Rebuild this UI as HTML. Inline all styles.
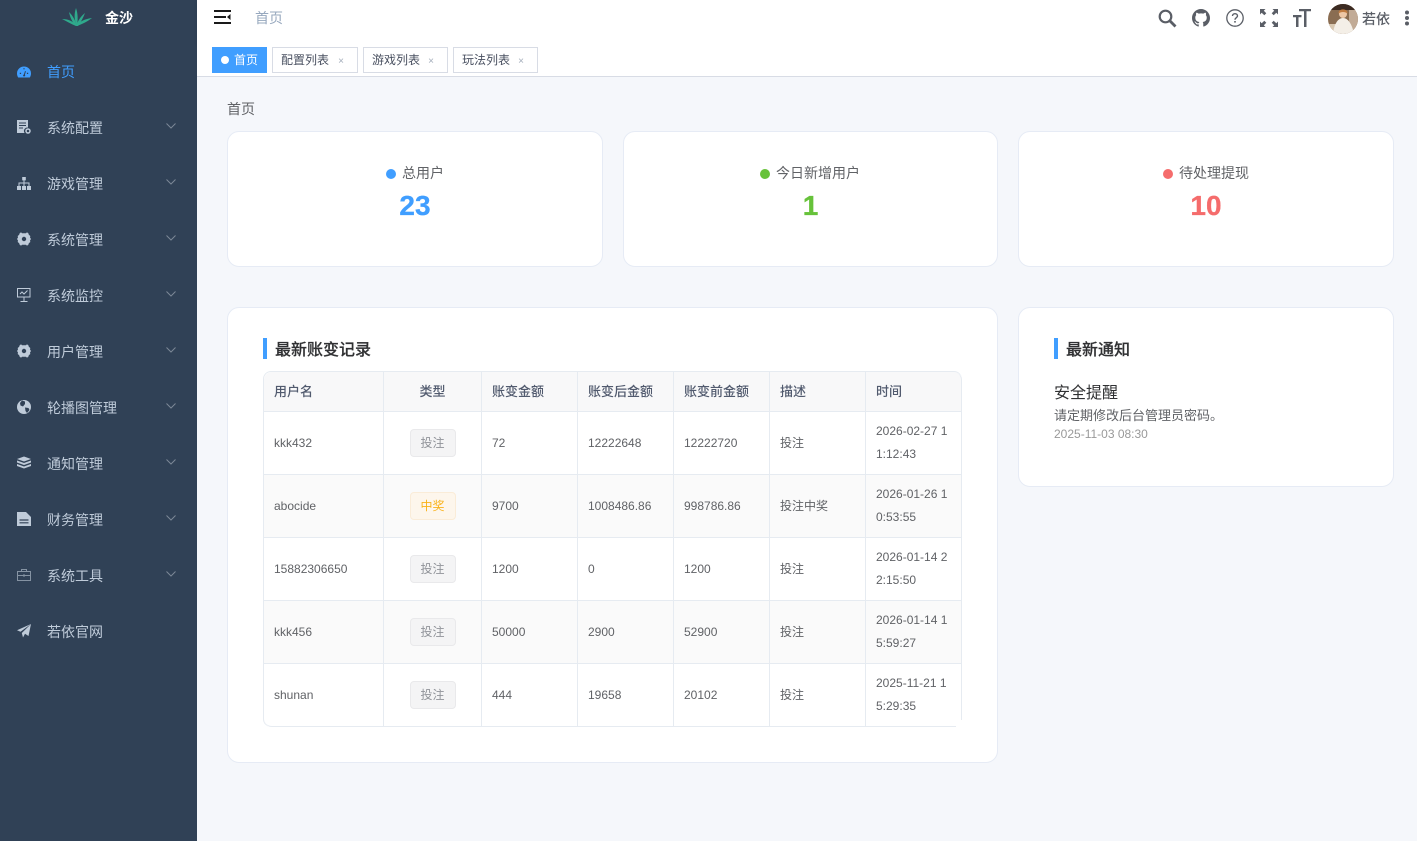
<!DOCTYPE html>
<html lang="zh"><head><meta charset="utf-8"><title>首页</title>
<style>
*{box-sizing:border-box}
html,body{margin:0;padding:0}
body{width:1417px;height:841px;overflow:hidden;position:relative;background:#f5f7fb;font-family:"Liberation Sans","Noto Sans CJK SC",sans-serif;color:#606266;font-size:12px}
.a{position:absolute;white-space:nowrap}
#side{left:0;top:0;width:197px;height:841px;background:#304156}
.mi{position:absolute;left:47px;width:110px;height:20px;line-height:20px;font-size:14px;color:#bfcbd9}
.ic{position:absolute;left:17px;width:14px;height:14px}
.ar{position:absolute;left:166px;width:10px;height:6px}
#top{left:197px;top:0;width:1220px;height:44px;background:#fff;box-shadow:0 1px 4px rgba(0,21,41,.06)}
#tags{left:197px;top:44px;width:1220px;height:33px;background:#fff;border-bottom:1px solid #d8dce5}
.tag{position:absolute;top:47px;height:26px;line-height:25px;border:1px solid #d8dce5;background:#fff;color:#495060;font-size:12px;padding-left:8px}
.tag i{position:absolute;right:13px;top:1px;font-style:normal;font-size:10px;color:#a3adba}
.card{position:absolute;background:#fff;border:1px solid #e6ebf5;border-radius:12px}
.lab{position:absolute;font-size:14px;color:#606266;line-height:20px;white-space:nowrap}
.dot{display:inline-block;width:10px;height:10px;border-radius:50%;margin-right:6px;vertical-align:-0.5px}
.num{position:absolute;font-size:28px;font-weight:700;line-height:32px;text-align:center;-webkit-text-stroke:.3px currentColor}
.ttl{position:absolute;height:21px;border-left:4px solid #409eff;padding-left:8px;font-size:16px;line-height:25px;font-weight:500;color:#303133;white-space:nowrap;-webkit-text-stroke:.2px #303133}
table{position:absolute;left:263px;top:371px;width:699px;border-collapse:separate;border-spacing:0;table-layout:fixed;border-top:1px solid #e6ebf1;border-left:1px solid #e6ebf1;border-radius:8px 8px 0 8px;font-size:12px;color:#606266;background:#fff}
td,th{border-right:1px solid #e6ebf1;border-bottom:1px solid #e6ebf1;padding:0 10px;text-align:left;vertical-align:middle;font-weight:400}
th{height:40px;background:#f8f8f9;color:#515a6e;font-size:13px;font-weight:500;border-radius:0;padding-bottom:2px}
th:first-child{border-top-left-radius:8px}
th:last-child{border-top-right-radius:8px}
tr:last-child td:first-child{border-bottom-left-radius:8px}
tr.o td{background:#fafafa}
td{height:63px;line-height:23px;word-break:break-all}
.c{text-align:center}
th.c{text-align:center}
.b{display:inline-block;width:46px;height:28px;line-height:26px;text-align:center;border-radius:4px;border:1px solid #e9e9eb;background:#f4f4f5;color:#909399;font-size:12px;vertical-align:middle}
.b.w{background:#fdf6ec;border-color:#faecd8;color:#f9b21a}
</style></head><body>

<div class="a" id="side">
<svg class="a" style="left:62px;top:8px" width="30" height="19" viewBox="0 0 30 19"><g fill="#2fa98c"><path d="M15 18C12 12 12 6 14 0C16 6 16 12 15 18Z"/><path d="M14 18C10 14 8 9 7 4C11 8 13 12 15 18Z"/><path d="M16 18C19 14 21 10 23 5C18 9 16 13 14 18Z"/><path d="M14 18C9 16 4 13 0 11C6 11 11 13 15 18Z"/><path d="M15 18C20 16 25 14 30 10C23 11 18 13 14 18Z"/></g></svg>
<div class="a" style="left:105px;top:9px;font-size:14px;line-height:18px;font-weight:700;color:#fff">金沙</div>

<svg class="ic" style="top:65px" viewBox="0 0 14 14"><path fill="#409eff" fill-rule="evenodd" d="M7 1.500A7 7 0 0 0 0 8.500C0 10 .5 11.300 1.200 12.500H12.800C13.500 11.300 14 10 14 8.500A7 7 0 0 0 7 1.500ZM6.500 3h1v1.400h-1ZM2.800 7.800h1.300V9H2.800ZM9.900 7.800h1.300V9H9.900ZM8 6l.9.400-1 3.400a1 1 0 1 1-1-.3Z"/></svg>
<div class="mi" style="top:62px;color:#409eff">首页</div>

<svg class="ic" style="top:120px" viewBox="0 0 14 14"><path fill="#bfcbd9" d="M0 0h11v7.500A3.500 3.500 0 0 0 7.600 13H0Z"/><path stroke="#304156" fill="none" d="M2 3h7M2 5.500h7M2 8h4"/><circle cx="11" cy="11" r="2" fill="none" stroke="#bfcbd9" stroke-width="1.500"/></svg>
<div class="mi" style="top:118px">系统配置</div>
<svg class="ar" style="top:123px" viewBox="0 0 10 6"><path d="M.5.500 5 5 9.500.500" fill="none" stroke="#7c8896"/></svg>

<svg class="ic" style="top:176px" viewBox="0 0 14 14"><path fill="#bfcbd9" d="M5.200 1h3.600v3.400H7.500V6.500h5V10h-1V7.500H7.500V10h-1V7.500H2.500V10h-1V6.500h5V4.400H5.200ZM0 10h4v4H0ZM5 10h4v4H5ZM10 10h4v4h-4Z"/></svg>
<div class="mi" style="top:174px">游戏管理</div>
<svg class="ar" style="top:179px" viewBox="0 0 10 6"><path d="M.5.500 5 5 9.500.500" fill="none" stroke="#7c8896"/></svg>

<svg class="ic" style="top:232px" viewBox="0 0 14 14"><path fill="#bfcbd9" fill-rule="evenodd" d="M4 .3 5 1.200H9L10 .3 11.500 1.500 11.800 2.800 13.300 4 13 5.500 14 7 13 8.500 13.300 10 11.800 11.200 11.500 12.500 10 13.700 9 12.800H5L4 13.700 2.500 12.500 2.200 11.200.7 10 1 8.500 0 7 1 5.500.7 4 2.200 2.800 2.500 1.500ZM7 4.800a2.200 2.200 0 1 0 0 4.400 2.200 2.200 0 0 0 0-4.400Z"/></svg>
<div class="mi" style="top:230px">系统管理</div>
<svg class="ar" style="top:235px" viewBox="0 0 10 6"><path d="M.5.500 5 5 9.500.500" fill="none" stroke="#7c8896"/></svg>

<svg class="ic" style="top:288px" viewBox="0 0 14 14"><path fill="none" stroke="#bfcbd9" d="M.5.500h12.500v8.500H.5ZM7 9v4M3.500 13.500h7M3 6l2-2 2 2 3.500-3.500"/></svg>
<div class="mi" style="top:286px">系统监控</div>
<svg class="ar" style="top:291px" viewBox="0 0 10 6"><path d="M.5.500 5 5 9.500.500" fill="none" stroke="#7c8896"/></svg>

<svg class="ic" style="top:344px" viewBox="0 0 14 14"><path fill="#bfcbd9" fill-rule="evenodd" d="M4 .3 5 1.200H9L10 .3 11.500 1.500 11.800 2.800 13.300 4 13 5.500 14 7 13 8.500 13.300 10 11.800 11.200 11.500 12.500 10 13.700 9 12.800H5L4 13.700 2.500 12.500 2.200 11.200.7 10 1 8.500 0 7 1 5.500.7 4 2.200 2.800 2.500 1.500ZM7 4.800a2.200 2.200 0 1 0 0 4.400 2.200 2.200 0 0 0 0-4.400Z"/></svg>
<div class="mi" style="top:342px">用户管理</div>
<svg class="ar" style="top:347px" viewBox="0 0 10 6"><path d="M.5.500 5 5 9.500.500" fill="none" stroke="#7c8896"/></svg>

<svg class="ic" style="top:400px" viewBox="0 0 14 14"><circle cx="7" cy="7" r="7" fill="#bfcbd9"/><path fill="#304156" d="M5 .5 8 1.500 8 4 6 6.500 3.500 5.500 3 3ZM8 7.500l3.500.5 1 2-2.500 3-1.500-2Z"/></svg>
<div class="mi" style="top:398px">轮播图管理</div>
<svg class="ar" style="top:403px" viewBox="0 0 10 6"><path d="M.5.500 5 5 9.500.500" fill="none" stroke="#7c8896"/></svg>

<svg class="ic" style="top:456px" viewBox="0 0 14 14"><path fill="#bfcbd9" d="M7 .5 14 3 7 5.500 0 3Z"/><path fill="#bfcbd9" d="M0 4.500 7 7 14 4.500V6.500L7 9 0 6.500ZM0 8 7 10.500 14 8V10L7 12.500 0 10Z"/></svg>
<div class="mi" style="top:454px">通知管理</div>
<svg class="ar" style="top:459px" viewBox="0 0 10 6"><path d="M.5.500 5 5 9.500.500" fill="none" stroke="#7c8896"/></svg>

<svg class="ic" style="top:512px" viewBox="0 0 14 14"><path fill="#bfcbd9" d="M0 0h9l5 5v9H0Z"/><path stroke="#304156" stroke-width="1.200" d="M2.500 8h9M2.500 10.800h9"/></svg>
<div class="mi" style="top:510px">财务管理</div>
<svg class="ar" style="top:515px" viewBox="0 0 10 6"><path d="M.5.500 5 5 9.500.500" fill="none" stroke="#7c8896"/></svg>

<svg class="ic" style="top:568px" viewBox="0 0 14 14"><path fill="none" stroke="#8593a3" d="M.5 3.500h13v9H.5ZM4.500 3.500V1.500h5v2M.5 7.500h13"/><rect x="6" y="6.500" width="2" height="2" fill="#8593a3"/></svg>
<div class="mi" style="top:566px">系统工具</div>
<svg class="ar" style="top:571px" viewBox="0 0 10 6"><path d="M.5.500 5 5 9.500.500" fill="none" stroke="#7c8896"/></svg>

<svg class="ic" style="top:624px" viewBox="0 0 14 14"><path fill="#bfcbd9" d="M14 0 11.500 12 8 9.800 6 13.500 4.800 9 14 0 3.500 7.800 0 6.300Z"/></svg>
<div class="mi" style="top:622px">若依官网</div>
</div>

<div class="a" id="top"></div>
<svg class="a" style="left:214px;top:10px" width="17" height="14" viewBox="0 0 17 14"><path fill="#1a1a1a" d="M0 0h17v2H0ZM0 6h12v2H0ZM0 12h17v2H0ZM16.500 4v6L13 7Z"/></svg>
<div class="a" style="left:255px;top:8px;font-size:14px;line-height:20px;color:#97a8be">首页</div>

<svg class="a" style="left:1158px;top:9px" width="19" height="19" viewBox="0 0 19 19"><circle cx="7.500" cy="7.500" r="5.800" fill="none" stroke="#5a5e66" stroke-width="2.200"/><path d="M11.800 11.800 17.500 17.500" stroke="#5a5e66" stroke-width="2.800"/></svg>
<svg class="a" style="left:1192px;top:9px" width="18" height="18" viewBox="0 0 16 16"><path fill="#5a5e66" d="M8 0C3.580 0 0 3.580 0 8c0 3.540 2.290 6.530 5.470 7.590.4.070.55-.17.550-.38 0-.19-.01-.82-.01-1.490-2.010.37-2.530-.49-2.690-.94-.09-.23-.48-.94-.82-1.130-.28-.15-.68-.52-.01-.53.63-.01 1.080.58 1.230.82.720 1.210 1.870.87 2.330.66.070-.52.280-.87.510-1.070-1.780-.2-3.640-.89-3.640-3.950 0-.87.310-1.590.820-2.150-.08-.2-.36-1.020.08-2.120 0 0 .67-.21 2.200.82.640-.18 1.320-.27 2-.27s1.360.09 2 .27c1.530-1.040 2.200-.82 2.200-.82.440 1.100.16 1.920.08 2.120.51.560.82 1.270.82 2.150 0 3.070-1.870 3.750-3.650 3.950.29.250.54.730.54 1.480 0 1.070-.01 1.930-.01 2.200 0 .21.150.46.550.38A8.010 8.010 0 0 0 16 8c0-4.420-3.580-8-8-8Z"/></svg>
<svg class="a" style="left:1226px;top:9px" width="18" height="18" viewBox="0 0 18 18"><circle cx="9" cy="9" r="8.200" fill="none" stroke="#5a5e66" stroke-width="1.300"/><path d="M6.500 7C6.500 5.500 7.700 4.700 9 4.700S11.500 5.600 11.500 7C11.500 8.700 9 8.800 9 10.800" fill="none" stroke="#5a5e66" stroke-width="1.400"/><rect x="8.200" y="12" width="1.600" height="1.600" fill="#5a5e66"/></svg>
<svg class="a" style="left:1260px;top:9px" width="18" height="18" viewBox="0 0 18 18"><path fill="#5a5e66" d="M0 0h5.500L3.800 1.700 6.300 4.300 4.300 6.300 1.700 3.800 0 5.500ZM18 0v5.500L16.300 3.800 13.700 6.300 11.700 4.300 14.200 1.700 12.500 0ZM0 18v-5.500L1.700 14.200 4.300 11.700 6.300 13.700 3.800 16.300 5.500 18ZM18 18h-5.500L14.200 16.300 11.700 13.700 13.700 11.700 16.300 14.200 18 12.500Z"/></svg>
<svg class="a" style="left:1293px;top:9px" width="18" height="18" viewBox="0 0 18 18"><path fill="#5a5e66" d="M6 0h12v2.300h-4.500V18H11V2.300H6ZM0 6h8.500v2.300H5.500V18H3V8.300H0Z"/></svg>

<svg class="a" style="left:1328px;top:4px" width="30" height="30" viewBox="0 0 30 30"><defs><clipPath id="av"><circle cx="15" cy="15" r="15"/></clipPath></defs><g clip-path="url(#av)"><rect width="30" height="30" fill="#8a6d52"/><rect x="21" y="0" width="9" height="30" fill="#c2ab96"/><rect x="0" y="0" width="30" height="6" fill="#3c2b22"/><rect x="0" y="20" width="8" height="10" fill="#d8c7b0"/><path d="M5 30C6 20 10 14 15 14S24 20 26 30Z" fill="#f4efe7"/><circle cx="15" cy="10" r="4" fill="#edc7a6"/><path d="M10.500 9.500C10 4 20 4 19.500 9.500 17 7.500 13 7.500 10.500 9.500Z" fill="#c07c42"/></g></svg>
<div class="a" style="left:1362px;top:10px;font-size:14px;line-height:18px;color:#5a5e66;font-weight:500">若依</div>
<svg class="a" style="left:1404px;top:10px" width="6" height="16" viewBox="0 0 6 16"><circle cx="3" cy="2.500" r="2" fill="#5a5e66"/><circle cx="3" cy="8" r="2" fill="#5a5e66"/><circle cx="3" cy="13.500" r="2" fill="#5a5e66"/></svg>

<div class="a" id="tags"></div>
<div class="tag" style="left:212px;width:55px;background:#409eff;border-color:#409eff;color:#fff;padding-left:21px">首页<span class="a" style="left:8px;top:8px;width:8px;height:8px;border-radius:50%;background:#fff"></span></div>
<div class="tag" style="left:272px;width:86px">配置列表<i>×</i></div>
<div class="tag" style="left:363px;width:85px">游戏列表<i>×</i></div>
<div class="tag" style="left:453px;width:85px">玩法列表<i>×</i></div>

<div class="a" style="left:227px;top:99px;font-size:14px;line-height:20px;color:#606266">首页</div>

<div class="card" style="left:227px;top:131px;width:376px;height:136px"></div>
<div class="lab" style="left:386px;top:163px"><span class="dot" style="background:#409eff"></span>总用户</div>
<div class="num" style="left:227px;top:190px;width:376px;color:#409eff">23</div>

<div class="card" style="left:623px;top:131px;width:375px;height:136px"></div>
<div class="lab" style="left:760px;top:163px"><span class="dot" style="background:#67c23a"></span>今日新增用户</div>
<div class="num" style="left:623px;top:190px;width:375px;color:#67c23a">1</div>

<div class="card" style="left:1018px;top:131px;width:376px;height:136px"></div>
<div class="lab" style="left:1163px;top:163px"><span class="dot" style="background:#f56c6c"></span>待处理提现</div>
<div class="num" style="left:1018px;top:190px;width:376px;color:#f56c6c">10</div>

<div class="card" style="left:227px;top:307px;width:771px;height:456px"></div>
<div class="ttl" style="left:263px;top:338px">最新账变记录</div>
<table>
<colgroup><col style="width:120px"><col style="width:98px"><col style="width:96px"><col style="width:96px"><col style="width:96px"><col style="width:96px"><col style="width:96px"></colgroup>
<tr><th>用户名</th><th class="c">类型</th><th>账变金额</th><th>账变后金额</th><th>账变前金额</th><th>描述</th><th>时间</th></tr>
<tr><td>kkk432</td><td class="c"><span class="b">投注</span></td><td>72</td><td>12222648</td><td>12222720</td><td>投注</td><td>2026-02-27 11:12:43</td></tr>
<tr class="o"><td>abocide</td><td class="c"><span class="b w">中奖</span></td><td>9700</td><td>1008486.86</td><td>998786.86</td><td>投注中奖</td><td>2026-01-26 10:53:55</td></tr>
<tr><td>15882306650</td><td class="c"><span class="b">投注</span></td><td>1200</td><td>0</td><td>1200</td><td>投注</td><td>2026-01-14 22:15:50</td></tr>
<tr class="o"><td>kkk456</td><td class="c"><span class="b">投注</span></td><td>50000</td><td>2900</td><td>52900</td><td>投注</td><td>2026-01-14 15:59:27</td></tr>
<tr><td>shunan</td><td class="c"><span class="b">投注</span></td><td>444</td><td>19658</td><td>20102</td><td>投注</td><td>2025-11-21 15:29:35</td></tr>
</table>
<div class="a" style="left:956px;top:720px;width:7px;height:8px;background:#fff"></div>

<div class="card" style="left:1018px;top:307px;width:376px;height:180px"></div>
<div class="ttl" style="left:1054px;top:338px">最新通知</div>
<div class="a" style="left:1054px;top:383px;font-size:16px;line-height:22px;color:#303133">安全提醒</div>
<div class="a" style="left:1054px;top:406px;font-size:13px;line-height:20px;color:#606266">请定期修改后台管理员密码。</div>
<div class="a" style="left:1054px;top:426px;font-size:12px;line-height:17px;color:#999">2025-11-03 08:30</div>
</body></html>
